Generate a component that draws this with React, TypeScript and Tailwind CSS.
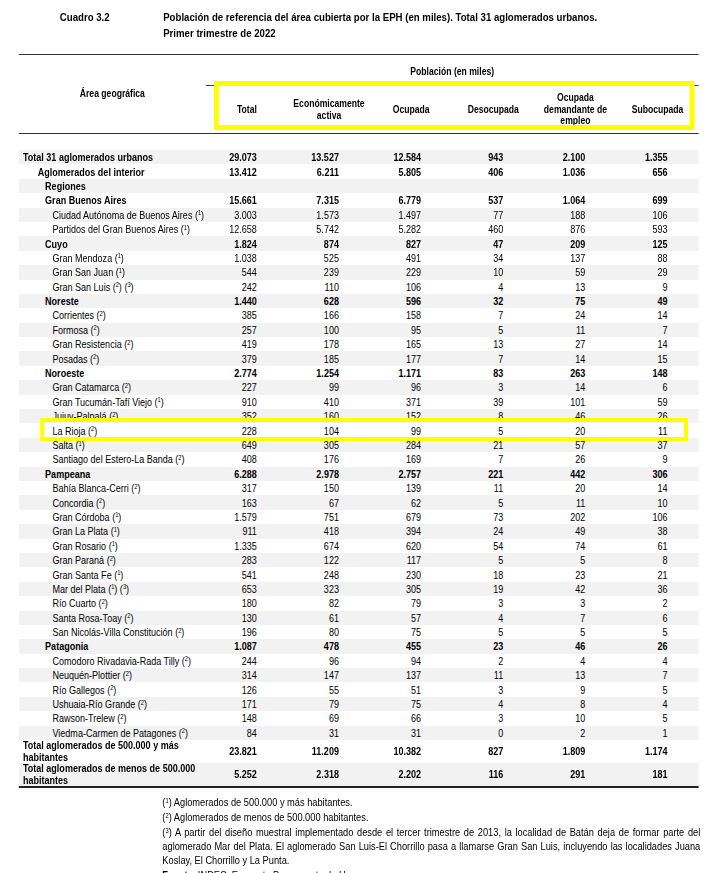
import React from 'react';

// The source table is set in a narrow grotesque; Liberation Sans squeezed to 82% gives the same widths.
type Row = { label: string; sup?: string[]; level: 0 | 1 | 2 | 3; bold?: boolean; v?: string[]; mark?: boolean };

const indent = ['pl-[5px]', 'pl-[23px]', 'pl-[32px]', 'pl-[41px]'];

const rows: Row[] = [
  { label: 'Total 31 aglomerados urbanos', level: 0, bold: true, v: ['29.073', '13.527', '12.584', '943', '2.100', '1.355'] },
  { label: 'Aglomerados del interior', level: 1, bold: true, v: ['13.412', '6.211', '5.805', '406', '1.036', '656'] },
  { label: 'Regiones', level: 2, bold: true },
  { label: 'Gran Buenos Aires', level: 2, bold: true, v: ['15.661', '7.315', '6.779', '537', '1.064', '699'] },
  { label: 'Ciudad Autónoma de Buenos Aires', sup: ['1'], level: 3, v: ['3.003', '1.573', '1.497', '77', '188', '106'] },
  { label: 'Partidos del Gran Buenos Aires', sup: ['1'], level: 3, v: ['12.658', '5.742', '5.282', '460', '876', '593'] },
  { label: 'Cuyo', level: 2, bold: true, v: ['1.824', '874', '827', '47', '209', '125'] },
  { label: 'Gran Mendoza', sup: ['1'], level: 3, v: ['1.038', '525', '491', '34', '137', '88'] },
  { label: 'Gran San Juan', sup: ['1'], level: 3, v: ['544', '239', '229', '10', '59', '29'] },
  { label: 'Gran San Luis', sup: ['2', '3'], level: 3, v: ['242', '110', '106', '4', '13', '9'] },
  { label: 'Noreste', level: 2, bold: true, v: ['1.440', '628', '596', '32', '75', '49'] },
  { label: 'Corrientes', sup: ['2'], level: 3, v: ['385', '166', '158', '7', '24', '14'] },
  { label: 'Formosa', sup: ['2'], level: 3, v: ['257', '100', '95', '5', '11', '7'] },
  { label: 'Gran Resistencia', sup: ['2'], level: 3, v: ['419', '178', '165', '13', '27', '14'] },
  { label: 'Posadas', sup: ['2'], level: 3, v: ['379', '185', '177', '7', '14', '15'] },
  { label: 'Noroeste', level: 2, bold: true, v: ['2.774', '1.254', '1.171', '83', '263', '148'] },
  { label: 'Gran Catamarca', sup: ['2'], level: 3, v: ['227', '99', '96', '3', '14', '6'] },
  { label: 'Gran Tucumán-Tafí Viejo', sup: ['1'], level: 3, v: ['910', '410', '371', '39', '101', '59'] },
  { label: 'Jujuy-Palpalá', sup: ['2'], level: 3, v: ['352', '160', '152', '8', '46', '26'] },
  { label: 'La Rioja', sup: ['2'], level: 3, v: ['228', '104', '99', '5', '20', '11'], mark: true },
  { label: 'Salta', sup: ['1'], level: 3, v: ['649', '305', '284', '21', '57', '37'] },
  { label: 'Santiago del Estero-La Banda', sup: ['2'], level: 3, v: ['408', '176', '169', '7', '26', '9'] },
  { label: 'Pampeana', level: 2, bold: true, v: ['6.288', '2.978', '2.757', '221', '442', '306'] },
  { label: 'Bahía Blanca-Cerri', sup: ['2'], level: 3, v: ['317', '150', '139', '11', '20', '14'] },
  { label: 'Concordia', sup: ['2'], level: 3, v: ['163', '67', '62', '5', '11', '10'] },
  { label: 'Gran Córdoba', sup: ['1'], level: 3, v: ['1.579', '751', '679', '73', '202', '106'] },
  { label: 'Gran La Plata', sup: ['1'], level: 3, v: ['911', '418', '394', '24', '49', '38'] },
  { label: 'Gran Rosario', sup: ['1'], level: 3, v: ['1.335', '674', '620', '54', '74', '61'] },
  { label: 'Gran Paraná', sup: ['2'], level: 3, v: ['283', '122', '117', '5', '5', '8'] },
  { label: 'Gran Santa Fe', sup: ['1'], level: 3, v: ['541', '248', '230', '18', '23', '21'] },
  { label: 'Mar del Plata', sup: ['1', '3'], level: 3, v: ['653', '323', '305', '19', '42', '36'] },
  { label: 'Río Cuarto', sup: ['2'], level: 3, v: ['180', '82', '79', '3', '3', '2'] },
  { label: 'Santa Rosa-Toay', sup: ['2'], level: 3, v: ['130', '61', '57', '4', '7', '6'] },
  { label: 'San Nicolás-Villa Constitución', sup: ['2'], level: 3, v: ['196', '80', '75', '5', '5', '5'] },
  { label: 'Patagonia', level: 2, bold: true, v: ['1.087', '478', '455', '23', '46', '26'] },
  { label: 'Comodoro Rivadavia-Rada Tilly', sup: ['2'], level: 3, v: ['244', '96', '94', '2', '4', '4'] },
  { label: 'Neuquén-Plottier', sup: ['2'], level: 3, v: ['314', '147', '137', '11', '13', '7'] },
  { label: 'Río Gallegos', sup: ['2'], level: 3, v: ['126', '55', '51', '3', '9', '5'] },
  { label: 'Ushuaia-Río Grande', sup: ['2'], level: 3, v: ['171', '79', '75', '4', '8', '4'] },
  { label: 'Rawson-Trelew', sup: ['2'], level: 3, v: ['148', '69', '66', '3', '10', '5'] },
  { label: 'Viedma-Carmen de Patagones', sup: ['2'], level: 3, v: ['84', '31', '31', '0', '2', '1'] },
];

const totals = [
  { l1: 'Total aglomerados de 500.000 y más', l2: 'habitantes', v: ['23.821', '11.209', '10.382', '827', '1.809', '1.174'], bg: 'bg-white' },
  { l1: 'Total aglomerados de menos de 500.000', l2: 'habitantes', v: ['5.252', '2.318', '2.202', '116', '291', '181'], bg: 'bg-[#f2f2f2]' },
];

const grid = 'grid grid-cols-[228px_repeat(6,minmax(0,1fr))]';

function Note({ n }: { n: string }) {
  return (
    <>
      {' '}(<sup className="text-[7px]">{n}</sup>)
    </>
  );
}

function DataRow({ row, i }: { row: Row; i: number }) {
  return (
    <div className={`relative ${grid} h-[14.4px] items-center leading-[14px] ${i % 2 === 0 ? 'bg-[#f2f2f2]' : 'bg-white'} ${row.bold ? 'font-bold' : ''}`}>
      <div className={`${indent[row.level]} whitespace-nowrap`}>
        {row.label}
        {row.sup?.map((n, k) => <Note key={k} n={n} />)}
      </div>
      {(row.v ?? ['', '', '', '', '', '']).map((v, k) => (
        <div key={k} className="pr-[38px] text-right">{v}</div>
      ))}
      {row.mark && <div className="absolute z-10 left-[26px] right-[13px] top-[-5px] bottom-[-3px] border-x-[5px] border-y-4 border-[#ffff00]" />}
    </div>
  );
}

export default function App() {
  const cols = [['Total'], ['Económicamente', 'activa'], ['Ocupada'], ['Desocupada'], ['Ocupada', 'demandante de', 'empleo'], ['Subocupada']];
  return (
    <div className="w-[706px] overflow-hidden bg-white">
      <div className="w-[861px] origin-top-left scale-x-[0.82] text-black font-['Liberation_Sans',Arial,sans-serif] text-[11px]">
        <div className="flex pl-[73px] pt-[9px] font-bold text-[11.75px] leading-[16px]">
          <div className="w-[126px]">Cuadro 3.2</div>
          <div>
            Población de referencia del área cubierta por la EPH (en miles). Total 31 aglomerados urbanos.
            <br />
            Primer trimestre de 2022
          </div>
        </div>

        <div className="ml-[23px] w-[829px] mt-[13px]">
          <div className={`${grid} border-t-[1.5px] border-b-[1.5px] border-[#333] font-bold text-[10.5px]`}>
            <div className="flex items-center justify-center">Área geográfica</div>
            <div className="col-span-6 relative">
              <div className="h-[30px] flex items-center justify-center pt-[3px]">Población (en miles)</div>
              <div className="border-t border-[#444] grid grid-cols-6 h-[48px] items-center text-center leading-[11.5px]">
                {cols.map((c, k) => (
                  <div key={k}>
                    {c.map((t, j) => <div key={j}>{t}</div>)}
                  </div>
                ))}
              </div>
              <div className="absolute left-[10px] right-[5px] top-[26px] bottom-[3px] border-x-[6px] border-y-[5px] border-[#ffff00]" />
            </div>
          </div>

          <div className="h-[16px]" />

          {rows.map((r, i) => <DataRow key={i} row={r} i={i} />)}

          {totals.map((t, k) => (
            <div key={k} className={`${grid} h-[23px] items-center font-bold leading-[11.5px] ${t.bg}`}>
              <div className="pl-[5px]">
                {t.l1}
                <br />
                {t.l2}
              </div>
              {t.v.map((v, j) => <div key={j} className="pr-[38px] text-right">{v}</div>)}
            </div>
          ))}
          <div className="border-t-2 border-[#222]" />
        </div>

        <div className="w-[854px] pl-[198px] pt-[7px] text-[11.3px] leading-[14px]">
          <p className="mb-[1px]">(<sup className="text-[7px]">1</sup>) Aglomerados de 500.000 y más habitantes.</p>
          <p className="mb-[1px]">(<sup className="text-[7px]">2</sup>) Aglomerados de menos de 500.000 habitantes.</p>
          <p className="mb-[1px] text-justify">
            (<sup className="text-[7px]">3</sup>) A partir del diseño muestral implementado desde el tercer trimestre de 2013, la localidad de Batán deja de formar parte del aglomerado Mar del Plata. El aglomerado San Luis-El Chorrillo pasa a llamarse Gran San Luis, incluyendo las localidades Juana Koslay, El Chorrillo y La Punta.
          </p>
          <p>
            <span className="font-bold">Fuente</span>: INDEC. Encuesta Permanente de Hogares.
          </p>
        </div>
      </div>
    </div>
  );
}
